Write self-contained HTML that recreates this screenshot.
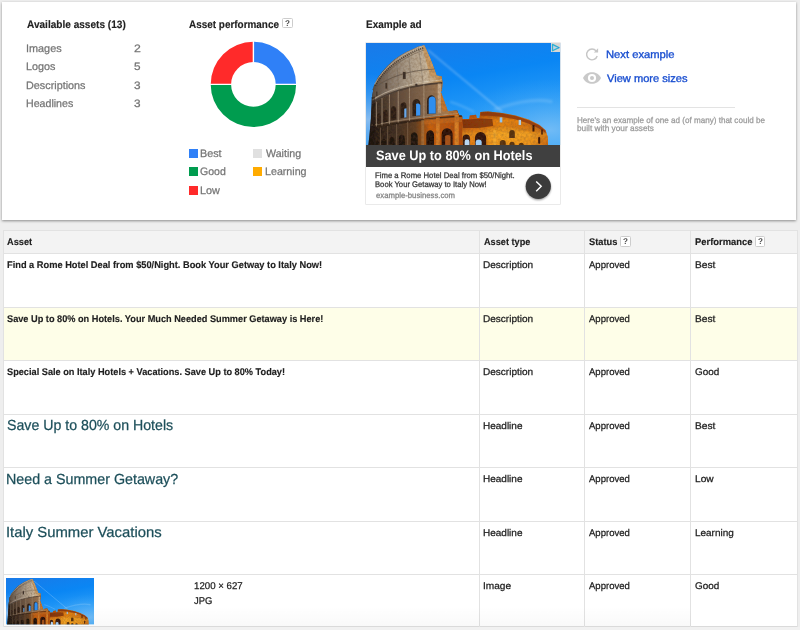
<!DOCTYPE html>
<html><head><meta charset="utf-8"><title>Asset details</title>
<style>
html,body{margin:0;padding:0}
body{width:800px;height:630px;overflow:hidden;background:#eeeeee;position:relative;font-family:"Liberation Sans",sans-serif}
.t{position:absolute;white-space:nowrap;line-height:1;transform-origin:0 0;display:block;text-rendering:geometricPrecision}
.abs{position:absolute}
.card{left:2px;top:2px;width:794px;height:217.5px;background:#fff;box-shadow:0 1px 2.5px rgba(0,0,0,.42)}
.q{position:absolute;width:8.7px;height:8.7px;border:1px solid #cdcdcd;background:#fff;border-radius:1.5px}
.q span{position:absolute;left:0;top:0;width:8.7px;font-size:8.4px;line-height:8.7px;text-align:center;font-weight:bold;color:#484848;transform:scaleX(.96);text-rendering:geometricPrecision}
.sq{position:absolute;width:9px;height:9px}
.hl{position:absolute;height:1px;background:#e2e2e2;left:3px;width:794px}
.vl{position:absolute;width:1px;background:#e2e2e2;top:230px;height:400px}
</style></head><body>
<svg width="0" height="0" style="position:absolute">
<defs>
<linearGradient id="sky" x1="0" y1="0" x2="0.35" y2="1"><stop offset="0" stop-color="#1a7ae8"/><stop offset="0.45" stop-color="#0a86f4"/><stop offset="1" stop-color="#36a6f8"/></linearGradient>
<radialGradient id="skyl" cx="0.02" cy="0.75" r="0.45"><stop offset="0" stop-color="#9cc4ee" stop-opacity=".85"/><stop offset="1" stop-color="#5a9ee8" stop-opacity="0"/></radialGradient>
<radialGradient id="skyr" cx="0.95" cy="0.85" r="0.5"><stop offset="0" stop-color="#7fc0f5" stop-opacity=".8"/><stop offset="1" stop-color="#3fa4f4" stop-opacity="0"/></radialGradient>
<linearGradient id="wall" x1="0" y1="0" x2="1" y2="0"><stop offset="0" stop-color="#564a40"/><stop offset="0.25" stop-color="#85776a"/><stop offset="0.5" stop-color="#a89a88"/><stop offset="0.78" stop-color="#c8b69c"/><stop offset="1" stop-color="#c08a48"/></linearGradient>
<linearGradient id="t2" x1="0" y1="0" x2="1" y2="0"><stop offset="0" stop-color="#2a2019"/><stop offset="0.3" stop-color="#5e4a3b"/><stop offset="0.65" stop-color="#876a50"/><stop offset="0.85" stop-color="#a87c52"/><stop offset="1" stop-color="#ba6c26"/></linearGradient>
<linearGradient id="t1" x1="0" y1="0" x2="1" y2="0"><stop offset="0" stop-color="#1a120d"/><stop offset="0.3" stop-color="#3f2e23"/><stop offset="0.5" stop-color="#5f3d22"/><stop offset="0.6" stop-color="#a2500f"/><stop offset="0.66" stop-color="#c9600e"/><stop offset="1" stop-color="#b04a0a"/></linearGradient>
<linearGradient id="org" x1="0" y1="0" x2="1" y2="0"><stop offset="0" stop-color="#8c3006"/><stop offset="0.25" stop-color="#d9650a"/><stop offset="0.55" stop-color="#ee8a10"/><stop offset="0.8" stop-color="#e07a10"/><stop offset="1" stop-color="#b84c0a"/></linearGradient>
<linearGradient id="orgv" x1="0" y1="0" x2="0" y2="1"><stop offset="0" stop-color="#6a2004" stop-opacity="0.65"/><stop offset="0.3" stop-color="#6a2004" stop-opacity="0"/><stop offset="0.65" stop-color="#ffc02e" stop-opacity="0.45"/><stop offset="1" stop-color="#ffb020" stop-opacity="0.3"/></linearGradient>
<filter id="soft" x="-5%" y="-5%" width="110%" height="110%"><feGaussianBlur stdDeviation="0.45"/></filter>
<filter id="soft2" x="-5%" y="-5%" width="110%" height="110%"><feGaussianBlur stdDeviation="0.9"/></filter>
<filter id="tex" x="0" y="0" width="100%" height="100%"><feTurbulence type="fractalNoise" baseFrequency="0.4" numOctaves="2" seed="7" result="n"/><feColorMatrix in="n" type="matrix" values="0 0 0 0 0.16  0 0 0 0 0.08  0 0 0 0 0.03  1.6 0 0 0 -0.55" result="a"/><feComposite in="a" in2="SourceGraphic" operator="in"/></filter>
<clipPath id="cclip"><rect width="194" height="101"/></clipPath>
<symbol id="colo" viewBox="0 0 194 101" preserveAspectRatio="none">
<g clip-path="url(#cclip)">
<rect width="194" height="101" fill="url(#sky)"/>
<rect width="194" height="101" fill="url(#skyl)"/>
<rect width="194" height="101" fill="url(#skyr)"/>
<g filter="url(#soft2)">
<path d="M62,7 L136,68" stroke="#cfe6fb" stroke-width="1.1" opacity=".5"/>
<path d="M128,66 C145,60 165,54 186,58" stroke="#9fd0f8" stroke-width="3" opacity=".28" fill="none"/>
<path d="M84,58 C92,60 100,64 108,68" stroke="#9fd0f8" stroke-width="2" opacity=".3" fill="none"/>
</g>
<g filter="url(#soft)">
<!-- lower right orange building -->
<path d="M88,67 L91,66.8 L92.7,70.8 L96.1,72.6 L96.1,75 L103,75 L103.6,71.6 L109.9,70.8 L110.7,74.2 L113.3,74.2 L114.2,68.2 L121.9,67.7 L135.6,69.1 L149.3,71.6 L163,75.9 L173.3,81 L179.3,86.2 L181.5,93 L181.8,102 L80,102 L80,68 Z" fill="url(#org)"/>
<path d="M88,67 L91,66.8 L92.7,70.8 L96.1,72.6 L96.1,75 L103,75 L103.6,71.6 L109.9,70.8 L110.7,74.2 L113.3,74.2 L114.2,68.2 L121.9,67.7 L135.6,69.1 L149.3,71.6 L163,75.9 L173.3,81 L179.3,86.2 L181.5,93 L181.8,102 L80,102 L80,68 Z" fill="url(#orgv)"/>
<!-- dark band upper left of orange bldg -->
<path d="M96,76 L114,74.5 L126,75 L127,82 L112,84 L97,84 Z" fill="#6a2206" opacity=".7"/>
<path d="M114.5,69 L122,68.4 L136,69.8 L150,72.4 L163,76.6 L173,81.6 L179,86.6 L179.5,89 L172,84 L162,79.5 L149,75.4 L135,73 L122,71.8 L114.5,72 Z" fill="#8a300a" opacity=".75"/>
<!-- windows & arches on orange bldg -->
<rect x="166.2" y="81" width="2" height="6.5" fill="#3a1404"/>
<rect x="175" y="85.5" width="1.5" height="5" fill="#3a1404"/>
<path d="M143,94 L143,89 A2.8,3 0 0 1 148.6,89 L148.6,94 Z" fill="#2a0e04"/>
<path d="M96.5,102 L96.5,94.5 A3.6,4 0 0 1 103.7,94.5 L103.7,102 Z" fill="#33150a"/>
<path d="M108.8,102 L108.8,94 A5.6,6 0 0 1 120,94 L120,102 Z" fill="#30120a"/>
<path d="M133.6,102 L133.6,99 A3,3.2 0 0 1 139.6,99 L139.6,102 Z" fill="#2a0e04"/>
<path d="M143.2,102 L143.2,100.2 A2.6,2.6 0 0 1 148.4,100.2 L148.4,102 Z" fill="#2a0e04"/>
<path d="M152.6,102 L152.6,101 A2.5,2.5 0 0 1 157.6,101 L157.6,102 Z" fill="#2a0e04"/>
<rect x="171.8" y="93" width="2.2" height="6.5" rx="1" fill="#3a1404"/>
<path d="M127,102 L127,86 L130,86 L130,102 Z" fill="#f6b338" opacity=".55"/>
<path d="M121,84 L142,83 L160,87 L172,93 L172,102 L121,102 Z" fill="#ffb730" opacity=".22"/>

<!-- tall wall silhouette -->
<path d="M2.2,102 L3.3,92.3 L4.8,77 L5.9,61.7 L6.4,51.5 L7.9,42.6 L11.5,34.9 L16.1,28.6 L21.2,22.9 L27.5,17.1 L33.9,12.7 L40.3,8.9 L46.7,6.1 L51.8,3.8 L58.1,2.2 L59.3,4.8 L63.6,14.2 L67,22.8 L70.4,32.2 L75.6,33.1 L76.4,39.1 L75.8,47 L74.7,48.5 L81.6,67.3 L91,67 L92.7,70.8 L96.1,72.6 L96.1,102 Z" fill="url(#t1)"/>
<!-- tier 2 -->
<path d="M4.6,83 L5.9,56 L7,58 C20,48.5 45,41 73,38.2 L76.4,39.1 L75.8,47 L74.7,48.5 L81.6,67.3 L91,67 L92,70.6 C60,73 30,78 4.6,83 Z" fill="url(#t2)"/>
<!-- attic wall -->
<path d="M5.9,60.5 L6.4,51.5 L7.9,42.6 L11.5,34.9 L16.1,28.6 L21.2,22.9 L27.5,17.1 L33.9,12.7 L40.3,8.9 L46.7,6.1 L51.8,3.8 L58.1,2.2 L59.3,4.8 L63.6,14.2 L67,22.8 L70.4,32.2 L75.6,33.1 L76.2,38.6 C48,41.5 22,49 5.9,60.5 Z" fill="url(#wall)"/>
<!-- slanted lit edge -->
<path d="M57.6,1.9 L59.3,4.8 L63.6,14.2 L67,22.8 L70.4,32.2 L64.5,33 L60.5,20 L56.5,6 Z" fill="#c9975a" opacity=".85"/>
<path d="M74.9,48.6 L81.6,67.3 L76.5,67.6 L72.8,50 Z" fill="#c8772e"/>
<!-- cornice lines -->
<path d="M8.6,41 C17.5,23.4 37.6,9.4 57.4,3.2" stroke="#cbbba4" stroke-width="1" fill="none" opacity=".7"/><path d="M9.4,42.4 C18.2,25 38.2,11 57.8,4.8" stroke="#352b23" stroke-width="1.7" stroke-dasharray="1 1.1" fill="none" opacity=".85"/><path d="M10,44.2 C19,27 38.6,13 58.4,6.8" stroke="#6b5f53" stroke-width="1" fill="none" opacity=".6"/>
<path d="M6.4,59 C22,48.5 47,41.5 76,39.4" stroke="#3e332b" stroke-width="1.6" fill="none" opacity=".85"/>
<path d="M6.4,56.3 C22,45.8 47,38.8 75.8,36.6" stroke="#e0d4c0" stroke-width="1" fill="none" opacity=".6"/>
<path d="M6.3,46 C20,35 42,27 68.4,25.8" stroke="#5d5147" stroke-width="1" fill="none" opacity=".7"/>
<path d="M5.3,84 C32,78.6 62,74.6 95.8,72.4" stroke="#2c1e15" stroke-width="1.8" fill="none" opacity=".85"/>
<path d="M5.3,81.4 C32,76 62,72 92,69.6" stroke="#b79c7e" stroke-width="1" fill="none" opacity=".6"/>
<!-- attic windows -->
<rect x="36.8" y="28.6" width="2.8" height="7" fill="#3b2f28"/>
<rect x="19.4" y="39.5" width="1.8" height="5.6" fill="#3b2f28"/>
<rect x="49.2" y="40.2" width="2.2" height="2.2" fill="#3b2f28"/>
<rect x="10.2" y="48" width="1.2" height="4.5" fill="#3b2f28"/>
<g stroke="#6b5f54" stroke-width=".7" opacity=".55">
<path d="M12.5,33.5 L12.2,51.5"/><path d="M20.8,25.5 L21.6,46.6"/><path d="M30.5,17.4 L32.4,43"/><path d="M42.5,9.8 L45.4,40.4"/><path d="M52.5,4.4 L57,39.2"/>
</g>
<!-- tier 2 arches -->
<path d="M61,70.2 L61,57 A4.3,5 0 0 1 69.6,56.3 L69.6,69.6 Z" fill="#2b1d15"/>
<path d="M46.4,72.4 L46.4,60.2 A3.9,4.6 0 0 1 54.2,59.6 L54.2,71.6 Z" fill="#2b1d15"/>
<path d="M34.4,74.4 L34.4,63 A3,4 0 0 1 40.4,62.4 L40.4,73.4 Z" fill="#2b1d15"/>
<path d="M25,76.6 L25,66.4 A2.6,3.6 0 0 1 30.2,66 L30.2,75.6 Z" fill="#2b1d15"/>
<path d="M17.3,78.8 L17.3,69.4 A2.2,3.2 0 0 1 21.7,69 L21.7,77.9 Z" fill="#2b1d15"/>
<path d="M11.3,80.6 L11.3,72.4 A1.7,2.6 0 0 1 14.7,72 L14.7,79.9 Z" fill="#2b1d15"/>
<path d="M7,82 L7,75.2 A1.2,2 0 0 1 9.4,75 L9.4,81.5 Z" fill="#2b1d15"/>
<!-- pilasters tier 2 -->
<g stroke="#c7b299" stroke-width="1.1" opacity=".55">
<path d="M57.8,41 L57.8,75"/><path d="M43.4,44 L43.4,77"/><path d="M32.2,47.4 L32.2,78.6"/><path d="M23.4,51 L23.4,80.2"/><path d="M16,54.4 L16,81.6"/><path d="M10.4,58 L10.4,82.6"/>
</g>
<path d="M71.6,40 L71.6,69.6 L74.8,69.4 L74.8,40 Z" fill="#cdb394" opacity=".8"/>
<!-- tier 1 arches -->
<path d="M75.5,102 L75.5,90.4 A5.5,6 0 0 1 86.5,90 L86.5,102 Z" fill="#2a0f05"/>
<path d="M79,102 L79,92 C81,90.4 83,90.6 84.4,92 L84.4,102 Z" fill="#a9521a"/>
<path d="M60.2,102 L60.2,91.4 A3.9,5 0 0 1 68,91 L68,102 Z" fill="#1f0e06"/>
<path d="M44.8,102 L44.8,93 A3.4,4.6 0 0 1 51.6,92.6 L51.6,102 Z" fill="#1d120c"/>
<path d="M32.8,102 L32.8,95 A3,4 0 0 1 38.8,94.6 L38.8,102 Z" fill="#1d120c"/>
<path d="M23.4,102 L23.4,96.6 A2.6,3.6 0 0 1 28.6,96.2 L28.6,102 Z" fill="#1d120c"/>
<path d="M15.6,102 L15.6,98 A2.2,3 0 0 1 20,97.6 L20,102 Z" fill="#1d120c"/>
<path d="M9.6,102 L9.6,99 A1.7,2.4 0 0 1 13,98.8 L13,102 Z" fill="#1d120c"/>
<path d="M5,102 L5,99.6 A1.2,1.8 0 0 1 7.4,99.5 L7.4,102 Z" fill="#1d120c"/>
<g stroke="#9c8066" stroke-width="1" opacity=".45">
<path d="M41.6,78 L41.6,102"/><path d="M30.6,80 L30.6,102"/><path d="M21.6,82 L21.6,102"/><path d="M14.4,83.4 L14.4,102"/>
</g>
<path d="M55.2,76 L55.2,102 L58.2,102 L58.2,75.6 Z" fill="#a9763f" opacity=".7"/>
<path d="M70,74 L70,102 L73.6,102 L73.6,73.6 Z" fill="#d9812a" opacity=".85"/>
<path d="M88.4,71 L88.4,102 L92.6,102 L92.6,71 Z" fill="#e28a2a" opacity=".85"/>
<path d="M58,75.4 L95.8,72.8 L95.8,78 L58,80.6 Z" fill="#c46a1e" opacity=".7"/>
<g filter="url(#tex)" opacity=".42"><path d="M2.2,102 L3.3,92.3 L4.8,77 L5.9,61.7 L6.4,51.5 L7.9,42.6 L11.5,34.9 L16.1,28.6 L21.2,22.9 L27.5,17.1 L33.9,12.7 L40.3,8.9 L46.7,6.1 L51.8,3.8 L58.1,2.2 L59.3,4.8 L63.6,14.2 L67,22.8 L70.4,32.2 L75.6,33.1 L76.4,39.1 L75.8,47 L74.7,48.5 L81.6,67.3 L91,67 L92.7,70.8 L96.1,72.6 L96.1,102 Z" fill="#000"/><path d="M88,67 L91,66.8 L92.7,70.8 L96.1,72.6 L96.1,75 L103,75 L103.6,71.6 L109.9,70.8 L110.7,74.2 L113.3,74.2 L114.2,68.2 L121.9,67.7 L135.6,69.1 L149.3,71.6 L163,75.9 L173.3,81 L179.3,86.2 L181.5,93 L181.8,102 L80,102 L80,68 Z" fill="#000"/></g>
<rect x="133.5" y="73.5" width="2.6" height="5" fill="#8fc4f2"/>
<rect x="152.4" y="76" width="2.4" height="5" fill="#a8cdea"/>
<path d="M98.5,102 L98.5,97.5 A2.4,2.4 0 0 1 103.3,97.5 L103.3,102 Z" fill="#b8d6f2"/>
<path d="M109.5,102 L109.5,98 A3,2.6 0 0 1 115.5,98 L115.5,102 Z" fill="#9ccaf2"/>
<path d="M62.6,70 L62.6,57.6 A3.5,4.4 0 0 1 69.6,57 L69.6,69.6 Z" fill="#2f8ef0"/>
<path d="M50,72 L50,60.4 C52,59.4 53.4,60 54.2,61.4 L54.2,71.6 Z" fill="#3a94f0"/>
<path d="M38.2,73.8 L38.2,65 L40.4,64.4 L40.4,73.4 Z" fill="#69a8ea"/>
<!-- left dark shade -->
<path d="M2.2,102 L3.6,89.6 L4.5,77.6 L5.3,65.6 L5.3,53.6 L9,53 L8.4,102 Z" fill="#1c140f" opacity=".45"/>
</g>
</g>
</symbol>

</defs>
</svg>

<div class="abs card"></div>

<!-- donut -->
<svg class="abs" style="left:203px;top:34px" width="100" height="100" viewBox="-50 -50 100 100">
<g transform="translate(0.4,0.4)">
<path d="M0,-42.7 A42.7,42.7 0 0 1 42.7,0 L22.3,0 A22.3,22.3 0 0 0 0,-22.3 Z" fill="#2f80f7"/>
<path d="M42.7,0 A42.7,42.7 0 0 1 -42.7,0 L-22.3,0 A22.3,22.3 0 0 0 22.3,0 Z" fill="#009c4f"/>
<path d="M-42.7,0 A42.7,42.7 0 0 1 0,-42.7 L0,-22.3 A22.3,22.3 0 0 0 -22.3,0 Z" fill="#ff2a2a"/>
<path d="M0,-44 L0,-21 M-44,0 L-21,0 M21,0 L44,0" stroke="#fff" stroke-width="1.4" fill="none"/>
</g>
</svg>

<!-- legend squares -->
<div class="sq" style="left:188.5px;top:148.8px;background:#2f80f7"></div>
<div class="sq" style="left:188.5px;top:167.4px;background:#009c4f"></div>
<div class="sq" style="left:188.5px;top:186px;background:#ff2a2a"></div>
<div class="sq" style="left:253.3px;top:148.8px;background:#e0e0e0"></div>
<div class="sq" style="left:253.3px;top:167.4px;background:#ffab00"></div>

<div class="q" style="left:281.9px;top:17.6px"><span>?</span></div>

<!-- ad -->
<div class="abs" style="left:366.3px;top:42.6px;width:194.1px;height:161.6px;background:#fff;box-shadow:0 0 0 0.6px #dcdcdc"></div>
<svg class="abs" style="left:366.3px;top:42.6px" width="194.3" height="102.2" viewBox="0 0 194 101" preserveAspectRatio="none"><use href="#colo"/></svg>
<div class="abs" style="left:366.3px;top:144.6px;width:194.1px;height:22.2px;background:#404040"></div>
<!-- adchoices -->
<svg class="abs" style="left:551.1px;top:42.6px" width="9.3" height="9.1" viewBox="0 0 9.3 9.1"><rect width="9.3" height="9.1" fill="#d8d6d3"/><path d="M1.5,1.4 L7.9,4.6 L1.5,7.8 Z" fill="#bfd2e2" stroke="#2eb0d2" stroke-width="1.25" stroke-linejoin="round"/><circle cx="7.7" cy="4.6" r=".7" fill="#1f8fe8"/></svg>
<!-- button -->
<svg class="abs" style="left:520px;top:168px" width="36" height="36" viewBox="0 0 36 36">
<defs><filter id="bs" x="-30%" y="-30%" width="160%" height="170%"><feGaussianBlur stdDeviation="1.2"/></filter></defs>
<circle cx="18.3" cy="19.6" r="12.4" fill="#000" opacity=".45" filter="url(#bs)"/>
<circle cx="18.3" cy="18.3" r="12.6" fill="#3b3b3b"/>
<path d="M16.2,13.4 L21.2,18.3 L16.2,23.2" fill="none" stroke="#fff" stroke-width="1.45" stroke-linecap="butt"/>
</svg>

<!-- link icons -->
<svg class="abs" style="left:583px;top:46px" width="18" height="17" viewBox="0 0 18 17">
<path d="M13.2,5.0 A5.4,5.4 0 1 0 14.2,10.0" fill="none" stroke="#c6c6c6" stroke-width="1.4"/>
<path d="M15.1,2.3 L15.1,6.6 L10.8,6.6 Z" fill="#c6c6c6"/>
</svg>
<svg class="abs" style="left:582px;top:71.3px" width="20" height="14" viewBox="0 0 20 14">
<path d="M1,7 C3.2,2.6 6.4,1.3 10,1.3 C13.6,1.3 16.8,2.6 19,7 C16.8,11.4 13.6,12.7 10,12.7 C6.4,12.7 3.2,11.4 1,7 Z" fill="#c9c9c9"/>
<circle cx="10" cy="7" r="4.1" fill="#fff"/>
<circle cx="10" cy="7" r="2" fill="#c9c9c9"/>
</svg>
<div class="abs" style="left:577.3px;top:107px;width:157.5px;height:1px;background:#e3e3e3"></div>

<!-- table -->
<div class="abs" style="left:3px;top:230px;width:794px;height:23px;background:#f3f3f3"></div>
<div class="abs" style="left:3px;top:253.6px;width:794px;height:373px;background:#fff"></div>
<div class="abs" style="left:3px;top:307.1px;width:794px;height:53px;background:#fefee8"></div>
<div class="hl" style="top:229.5px"></div>
<div class="hl" style="top:253.1px"></div>
<div class="hl" style="top:306.6px"></div>
<div class="hl" style="top:360.1px"></div>
<div class="hl" style="top:413.6px"></div>
<div class="hl" style="top:467.1px"></div>
<div class="hl" style="top:520.6px"></div>
<div class="hl" style="top:574.1px"></div>
<div class="hl" style="top:625.6px;background:#dadada"></div>
<div class="vl" style="left:2.5px"></div>
<div class="vl" style="left:479.3px"></div>
<div class="vl" style="left:584.2px"></div>
<div class="vl" style="left:690.2px"></div>
<div class="vl" style="left:796.6px"></div>
<div class="q" style="left:620.2px;top:236.4px"><span>?</span></div>
<div class="q" style="left:754.7px;top:236.4px"><span>?</span></div>

<svg class="abs" style="left:6px;top:578px" width="88.2" height="46.5" viewBox="0 0 194 101" preserveAspectRatio="none"><use href="#colo"/></svg>

<span class="t" style="left:26.55px;top:20px;font-size:10.8px;font-weight:bold;color:#212121;transform:scaleX(0.9330);-webkit-text-stroke:0.14px #212121;">Available assets (13)</span>
<span class="t" style="left:25.80px;top:44px;font-size:10.8px;color:#757575;transform:scaleX(1.0053);-webkit-text-stroke:0.25px #757575;">Images</span>
<span class="t" style="left:25.92px;top:62px;font-size:10.8px;color:#757575;transform:scaleX(0.9984);-webkit-text-stroke:0.25px #757575;">Logos</span>
<span class="t" style="left:25.91px;top:81px;font-size:10.8px;color:#757575;transform:scaleX(1.0012);-webkit-text-stroke:0.25px #757575;">Descriptions</span>
<span class="t" style="left:25.93px;top:99px;font-size:10.8px;color:#757575;transform:scaleX(0.9839);-webkit-text-stroke:0.25px #757575;">Headlines</span>
<span class="t" style="left:133.98px;top:44px;font-size:10.8px;color:#757575;transform:scaleX(1.1361);-webkit-text-stroke:0.25px #757575;">2</span>
<span class="t" style="left:134.13px;top:62px;font-size:10.8px;color:#757575;transform:scaleX(1.0917);-webkit-text-stroke:0.25px #757575;">5</span>
<span class="t" style="left:134.15px;top:81px;font-size:10.8px;color:#757575;transform:scaleX(1.0917);-webkit-text-stroke:0.25px #757575;">3</span>
<span class="t" style="left:134.15px;top:99px;font-size:10.8px;color:#757575;transform:scaleX(1.0917);-webkit-text-stroke:0.25px #757575;">3</span>
<span class="t" style="left:188.75px;top:20px;font-size:10.8px;font-weight:bold;color:#212121;transform:scaleX(0.9200);-webkit-text-stroke:0.14px #212121;">Asset performance</span>
<span class="t" style="left:200.12px;top:149px;font-size:10.8px;color:#757575;transform:scaleX(0.9979);-webkit-text-stroke:0.25px #757575;">Best</span>
<span class="t" style="left:200.47px;top:167px;font-size:10.8px;color:#757575;transform:scaleX(0.9769);-webkit-text-stroke:0.25px #757575;">Good</span>
<span class="t" style="left:200.11px;top:186px;font-size:10.8px;color:#757575;transform:scaleX(1.0025);-webkit-text-stroke:0.25px #757575;">Low</span>
<span class="t" style="left:265.95px;top:149px;font-size:10.8px;color:#757575;transform:scaleX(0.9866);-webkit-text-stroke:0.25px #757575;">Waiting</span>
<span class="t" style="left:265.12px;top:167px;font-size:10.8px;color:#757575;transform:scaleX(0.9889);-webkit-text-stroke:0.25px #757575;">Learning</span>
<span class="t" style="left:366.33px;top:20px;font-size:10.8px;font-weight:bold;color:#212121;transform:scaleX(0.9269);-webkit-text-stroke:0.14px #212121;">Example ad</span>
<span class="t" style="left:606.08px;top:50px;font-size:10.8px;color:#1a4fd0;transform:scaleX(1.0379);-webkit-text-stroke:0.35px #1a4fd0;">Next example</span>
<span class="t" style="left:606.95px;top:74px;font-size:10.8px;color:#1a4fd0;transform:scaleX(1.0273);-webkit-text-stroke:0.35px #1a4fd0;">View more sizes</span>
<span class="t" style="left:576.64px;top:116px;font-size:8.4px;color:#9a9a9a;transform:scaleX(0.9646);-webkit-text-stroke:0.25px #9a9a9a;">Here&#39;s an example of one ad (of many) that could be</span>
<span class="t" style="left:576.76px;top:124px;font-size:8.4px;color:#9a9a9a;transform:scaleX(0.9908);-webkit-text-stroke:0.25px #9a9a9a;">built with your assets</span>
<span class="t" style="left:375.63px;top:149px;font-size:13.7px;font-weight:bold;color:#ffffff;transform:scaleX(0.9310);">Save Up to 80% on Hotels</span>
<span class="t" style="left:375.27px;top:172px;font-size:8.1px;color:#333333;transform:scaleX(0.9551);-webkit-text-stroke:0.25px #333333;">Fime a Rome Hotel Deal from $50/Night.</span>
<span class="t" style="left:375.27px;top:181px;font-size:8.1px;color:#333333;transform:scaleX(0.9470);-webkit-text-stroke:0.25px #333333;">Book Your Getaway to Italy Now!</span>
<span class="t" style="left:375.57px;top:192px;font-size:8.1px;color:#808080;transform:scaleX(0.9548);-webkit-text-stroke:0.25px #808080;">example-business.com</span>
<span class="t" style="left:7.27px;top:238px;font-size:9.7px;font-weight:bold;color:#212121;transform:scaleX(0.9527);-webkit-text-stroke:0.14px #212121;">Asset</span>
<span class="t" style="left:483.57px;top:238px;font-size:9.7px;font-weight:bold;color:#212121;transform:scaleX(0.9458);-webkit-text-stroke:0.14px #212121;">Asset type</span>
<span class="t" style="left:589.03px;top:238px;font-size:9.7px;font-weight:bold;color:#212121;transform:scaleX(0.9574);-webkit-text-stroke:0.14px #212121;">Status</span>
<span class="t" style="left:694.87px;top:238px;font-size:9.7px;font-weight:bold;color:#212121;transform:scaleX(0.9699);-webkit-text-stroke:0.14px #212121;">Performance</span>
<span class="t" style="left:6.88px;top:261px;font-size:9.7px;font-weight:bold;color:#212121;transform:scaleX(0.9560);-webkit-text-stroke:0.14px #212121;">Find a Rome Hotel Deal from $50/Night. Book Your Getway to Italy Now!</span>
<span class="t" style="left:7.23px;top:315px;font-size:9.7px;font-weight:bold;color:#212121;transform:scaleX(0.9488);-webkit-text-stroke:0.14px #212121;">Save Up to 80% on Hotels. Your Much Needed Summer Getaway is Here!</span>
<span class="t" style="left:7.23px;top:368px;font-size:9.7px;font-weight:bold;color:#212121;transform:scaleX(0.9490);-webkit-text-stroke:0.14px #212121;">Special Sale on Italy Hotels + Vacations. Save Up to 80% Today!</span>
<span class="t" style="left:6.86px;top:419px;font-size:14.6px;color:#1d4f5a;transform:scaleX(0.9707);-webkit-text-stroke:0.25px #1d4f5a;">Save Up to 80% on Hotels</span>
<span class="t" style="left:6.33px;top:473px;font-size:14.6px;color:#1d4f5a;transform:scaleX(0.9782);-webkit-text-stroke:0.25px #1d4f5a;">Need a Summer Getaway?</span>
<span class="t" style="left:6.13px;top:526px;font-size:14.6px;color:#1d4f5a;transform:scaleX(1.0172);-webkit-text-stroke:0.25px #1d4f5a;">Italy Summer Vacations</span>
<span class="t" style="left:193.66px;top:582px;font-size:9.8px;color:#212121;transform:scaleX(0.9881);-webkit-text-stroke:0.25px #212121;">1200 × 627</span>
<span class="t" style="left:194.25px;top:597px;font-size:9.8px;color:#212121;transform:scaleX(0.9627);-webkit-text-stroke:0.25px #212121;">JPG</span>
<span class="t" style="left:482.98px;top:261px;font-size:9.7px;color:#212121;transform:scaleX(1.0352);-webkit-text-stroke:0.25px #212121;">Description</span>
<span class="t" style="left:589.28px;top:261px;font-size:9.7px;color:#212121;transform:scaleX(0.9843);-webkit-text-stroke:0.25px #212121;">Approved</span>
<span class="t" style="left:694.66px;top:261px;font-size:9.7px;color:#212121;transform:scaleX(1.0527);-webkit-text-stroke:0.25px #212121;">Best</span>
<span class="t" style="left:482.98px;top:315px;font-size:9.7px;color:#212121;transform:scaleX(1.0352);-webkit-text-stroke:0.25px #212121;">Description</span>
<span class="t" style="left:589.28px;top:315px;font-size:9.7px;color:#212121;transform:scaleX(0.9843);-webkit-text-stroke:0.25px #212121;">Approved</span>
<span class="t" style="left:694.66px;top:315px;font-size:9.7px;color:#212121;transform:scaleX(1.0527);-webkit-text-stroke:0.25px #212121;">Best</span>
<span class="t" style="left:482.98px;top:368px;font-size:9.7px;color:#212121;transform:scaleX(1.0352);-webkit-text-stroke:0.25px #212121;">Description</span>
<span class="t" style="left:589.28px;top:368px;font-size:9.7px;color:#212121;transform:scaleX(0.9843);-webkit-text-stroke:0.25px #212121;">Approved</span>
<span class="t" style="left:695.00px;top:368px;font-size:9.7px;color:#212121;transform:scaleX(1.0226);-webkit-text-stroke:0.25px #212121;">Good</span>
<span class="t" style="left:482.68px;top:422px;font-size:9.7px;color:#212121;transform:scaleX(1.0318);-webkit-text-stroke:0.25px #212121;">Headline</span>
<span class="t" style="left:589.28px;top:422px;font-size:9.7px;color:#212121;transform:scaleX(0.9843);-webkit-text-stroke:0.25px #212121;">Approved</span>
<span class="t" style="left:694.66px;top:422px;font-size:9.7px;color:#212121;transform:scaleX(1.0527);-webkit-text-stroke:0.25px #212121;">Best</span>
<span class="t" style="left:482.68px;top:475px;font-size:9.7px;color:#212121;transform:scaleX(1.0318);-webkit-text-stroke:0.25px #212121;">Headline</span>
<span class="t" style="left:589.28px;top:475px;font-size:9.7px;color:#212121;transform:scaleX(0.9843);-webkit-text-stroke:0.25px #212121;">Approved</span>
<span class="t" style="left:694.67px;top:475px;font-size:9.7px;color:#212121;transform:scaleX(1.0465);-webkit-text-stroke:0.25px #212121;">Low</span>
<span class="t" style="left:482.68px;top:529px;font-size:9.7px;color:#212121;transform:scaleX(1.0318);-webkit-text-stroke:0.25px #212121;">Headline</span>
<span class="t" style="left:589.28px;top:529px;font-size:9.7px;color:#212121;transform:scaleX(0.9843);-webkit-text-stroke:0.25px #212121;">Approved</span>
<span class="t" style="left:694.68px;top:529px;font-size:9.7px;color:#212121;transform:scaleX(1.0276);-webkit-text-stroke:0.25px #212121;">Learning</span>
<span class="t" style="left:482.87px;top:582px;font-size:9.7px;color:#212121;transform:scaleX(1.0425);-webkit-text-stroke:0.25px #212121;">Image</span>
<span class="t" style="left:589.28px;top:582px;font-size:9.7px;color:#212121;transform:scaleX(0.9843);-webkit-text-stroke:0.25px #212121;">Approved</span>
<span class="t" style="left:695.00px;top:582px;font-size:9.7px;color:#212121;transform:scaleX(1.0226);-webkit-text-stroke:0.25px #212121;">Good</span>

<div class="abs" style="left:0;top:626.6px;width:800px;height:4px;background:#f1f1f1"></div>
<div class="abs" style="left:3px;top:606px;width:688px;height:20px;border-top-right-radius:8px;background:linear-gradient(to bottom,rgba(0,0,0,0),rgba(0,0,0,.025))"></div>
</body></html>
